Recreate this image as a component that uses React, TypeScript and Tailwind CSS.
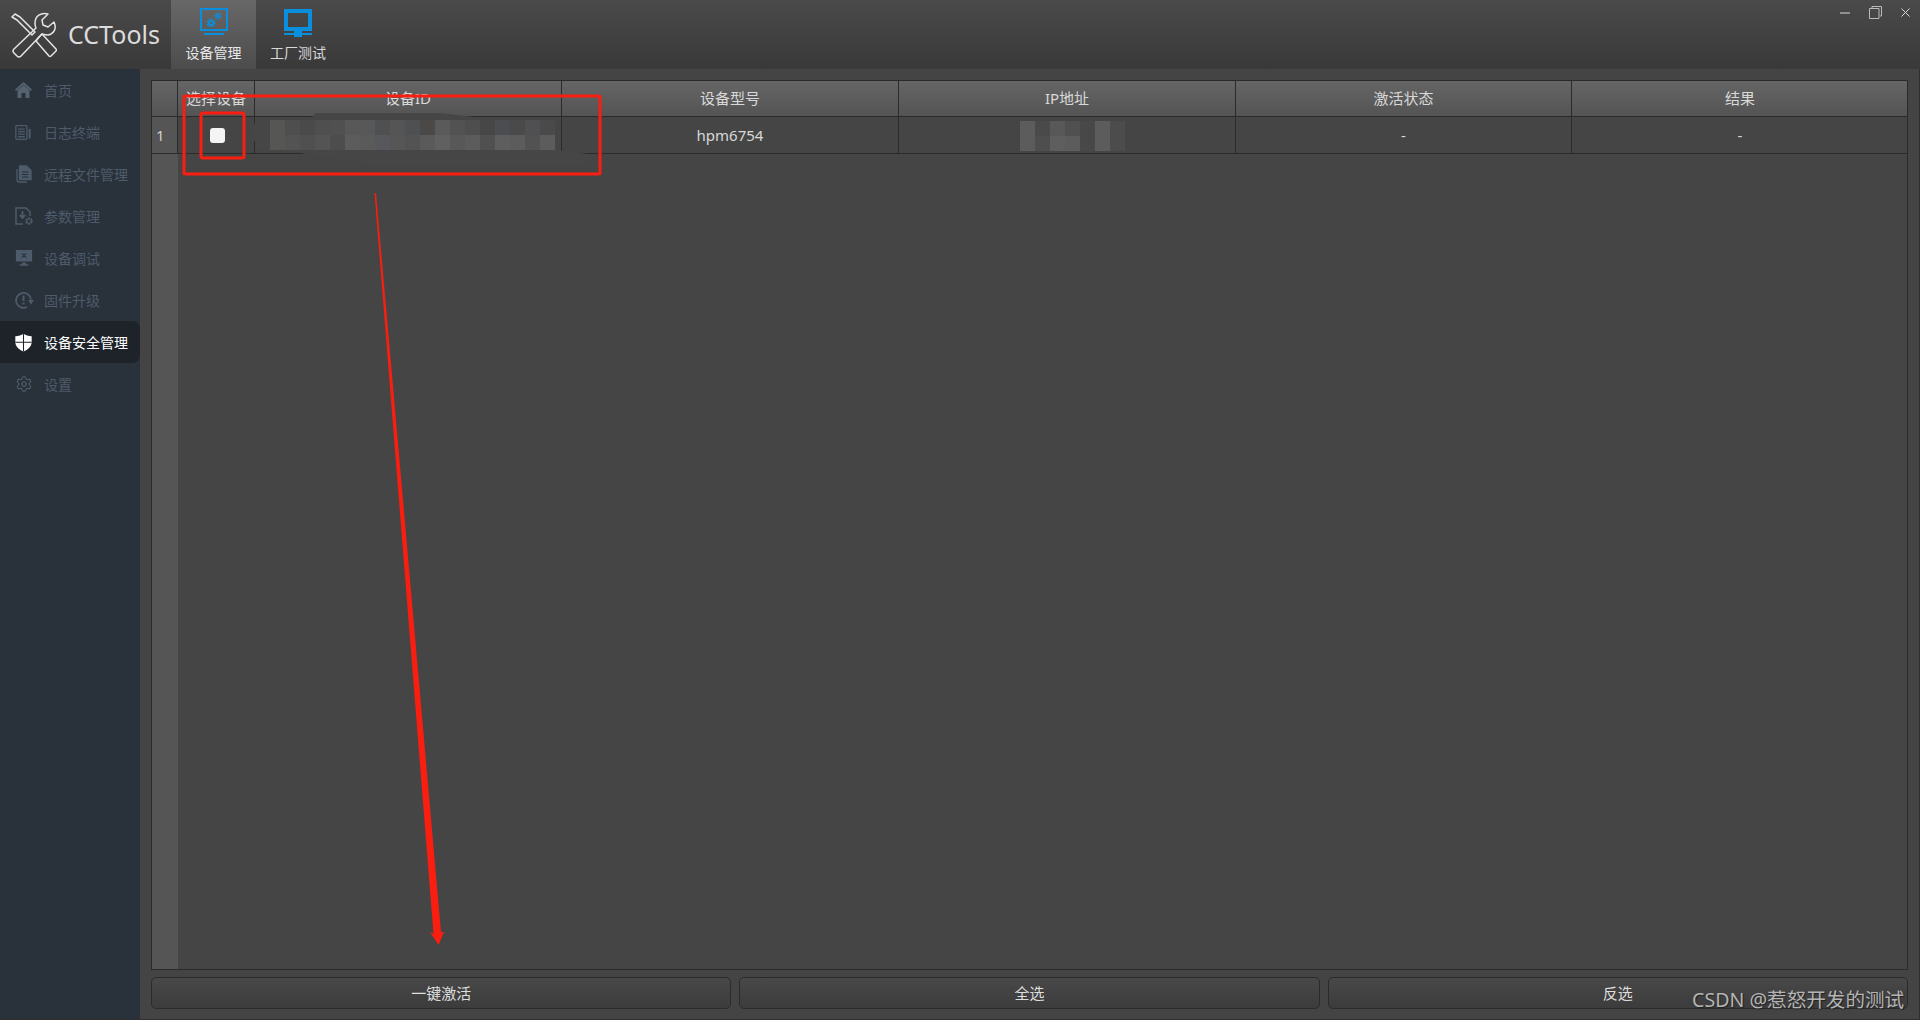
import { Settings } from 'lucide-react';

const font = { fontFamily: '"Noto Sans", "Noto Sans CJK SC", sans-serif' };

function HomeIcon() {
  return (
    <svg viewBox="0 0 17 16" className="h-[16px] w-[17px]" fill="#55626f">
      <path d="M8.500 0L17 7.500L16 9L8.500 2.500L1 9L0 7.500z" />
      <path d="M2.500 8L8.500 3L14.500 8V16H10.500V11H6.500V16H2.500z" />
    </svg>
  );
}

function LogIcon() {
  return (
    <svg viewBox="0 0 20 20" className="h-[17px] w-[17px]" fill="none" stroke="currentColor" strokeWidth="1.5">
      <rect x="1" y="2" width="13" height="16" rx="1" />
      <path d="M3.500 6h8M3.500 9h8M3.500 12h8M3.500 15h8" />
      <path d="M16 6h2.400v10l-1.200 2-1.200-2z" fill="currentColor" stroke="none" />
    </svg>
  );
}

function FileIcon() {
  return (
    <svg viewBox="0 0 16 18" className="h-[18px] w-[16px]" fill="none" stroke="#4e5b6a" strokeWidth="1.300">
      <path d="M1 4v11q0 2 2 2h8" />
      <path d="M3.500 1H10.500L15 5.500V14.500H3.500z" fill="#4e5b6a" />
      <path d="M6 7h6.500M6 9.500h6.500M6 12h6.500" stroke="#29313b" strokeWidth="1" />
    </svg>
  );
}

function ParamIcon() {
  return (
    <svg viewBox="0 0 20 20" className="h-[20px] w-[20px]" fill="none" stroke="currentColor" strokeWidth="1.500">
      <path d="M9 18H2V2h10l4 4v4" />
      <path d="M8.500 5v6M5.800 9l2.700 3 2.700-3" strokeWidth="1.800" />
      <circle cx="15" cy="15" r="2.600" strokeWidth="2.400" strokeDasharray="2 0.700" />
    </svg>
  );
}

function DebugIcon() {
  return (
    <svg viewBox="0 0 20 20" className="h-[18px] w-[18px]" fill="currentColor">
      <path d="M1 1h18v13H1zM8 15h4v2h3v1.500H5V17h3z" />
      <path d="M7.500 5l5 4.500M12.500 5l-5 4.500" stroke="#29313b" strokeWidth="1.200" />
    </svg>
  );
}

function UpgradeIcon() {
  return (
    <svg viewBox="0 0 20 20" className="h-[20px] w-[20px]" fill="none" stroke="currentColor" strokeWidth="1.800">
      <path d="M17 9.500A7.500 7.500 0 1 0 13 17" />
      <path d="M14 10h6l-3 4.500z" fill="currentColor" stroke="none" />
      <path d="M9.500 5.500v5.500M9.500 12.500v2" strokeWidth="2" />
    </svg>
  );
}

function ShieldIcon() {
  return (
    <svg viewBox="0 0 20 20" className="h-[19px] w-[19px]" fill="currentColor">
      <path d="M10 .8c2.400 1.600 5 2.300 8.600 2.500v6.200c0 4.400-3.400 8-8.600 9.900-5.200-1.900-8.600-5.500-8.600-9.900V3.300C5 3.100 7.600 2.400 10 .8z" />
      <path d="M10 .8v18.600M1.400 9.800h17.200" stroke="#1e2329" strokeWidth="1.100" />
    </svg>
  );
}

const menu = [
  { label: '首页', icon: <HomeIcon /> },
  { label: '日志终端', icon: <LogIcon /> },
  { label: '远程文件管理', icon: <FileIcon /> },
  { label: '参数管理', icon: <ParamIcon /> },
  { label: '设备调试', icon: <DebugIcon /> },
  { label: '固件升级', icon: <UpgradeIcon /> },
  { label: '设备安全管理', icon: <ShieldIcon />, active: true },
  { label: '设置', icon: <Settings className="h-[18px] w-[18px]" strokeWidth={1.500} /> },
];

const columns = [
  { title: '选择设备', width: 'w-[77px]', value: '' },
  { title: '设备ID', width: 'w-[307px]', value: '' },
  { title: '设备型号', width: 'w-[337px]', value: 'hpm6754' },
  { title: 'IP地址', width: 'w-[337px]', value: '' },
  { title: '激活状态', width: 'w-[336px]', value: '-' },
  { title: '结果', width: 'w-[336px]', value: '-' },
];

const idMosaic = [
  ['#565654', '#4e4e4e', '#4a4a4a', '#4f4f4f', '#505050', '#585858', '#585858', '#4e5052', '#555555', '#4f5052', '#4a4948', '#5a5a5a', '#525252', '#4e4e4e', '#474747', '#4c4d50', '#4a4a4a', '#505052', '#4a4a4a'],
  ['#565654', '#535353', '#505050', '#545454', '#4d4d4d', '#5c5c5c', '#5a5a5a', '#56585c', '#565656', '#535353', '#5a5a5a', '#606060', '#585858', '#5c5c5c', '#505050', '#5e5e5e', '#5c5c5c', '#525252', '#5c5c5c'],
];

const ipMosaic = [
  ['#5c5c5c', '#4a4a4a', '#585858', '#505050', '#484848', '#5c5c5c', '#4c4c4c'],
  ['#5c5c5c', '#4e4e4e', '#5e5e5e', '#5c5c5c', '#484848', '#5c5c5c', '#4c4c4c'],
];

function Mosaic({ rows, className }: { rows: string[][]; className: string }) {
  return (
    <div className={`absolute flex flex-col ${className}`}>
      {rows.map((row, i) => (
        <div key={i} className="flex h-[15px]">
          {row.map((c, j) => (
            <div key={j} className="h-full w-[15px]" style={{ backgroundColor: c }} />
          ))}
        </div>
      ))}
    </div>
  );
}

// the hand-drawn privacy smudge that sits under the mosaic
function Smudge() {
  return (
    <svg className="pointer-events-none absolute left-0 top-0 h-[1020px] w-[1920px]" viewBox="0 0 1920 1020">
      <path d="M255 121L310 119L316 113L440 113L500 120L556 128L558 150L588 154L590 162L586 165L372 165L300 153L258 150L252 135z" fill="#464646" />
    </svg>
  );
}

function Annotations() {
  return (
    <svg className="pointer-events-none absolute left-0 top-0 h-[1020px] w-[1920px]" viewBox="0 0 1920 1020" fill="none">
      <rect x="184" y="96" width="416" height="78" rx="1" stroke="#fa1e10" strokeWidth="3" />
      <rect x="201" y="113" width="43" height="45" rx="2" stroke="#fa1e10" strokeWidth="3" />
      <path d="M374.500 193L376 193L441 932L444 932L438.500 945L430 932L433.500 934z" fill="#fa1e10" />
    </svg>
  );
}

function TableHead() {
  return (
    <div className="flex h-[36px] border-b border-[#2b2b2b] bg-gradient-to-b from-[#656565] to-[#545454]">
      {columns.map((c) => (
        <div key={c.title} className={`flex ${c.width} shrink-0 items-center justify-center border-r border-[#2b2b2b] text-[15px] text-[#d8d8d8] last:border-r-0`}>
          {c.title}
        </div>
      ))}
    </div>
  );
}

function TableRow() {
  return (
    <div className="flex h-[37px] border-b border-[#2b2b2b]">
      {columns.map((c, i) => (
        <div key={c.title} className={`flex ${c.width} shrink-0 items-center justify-center border-r border-[#2b2b2b] text-[15px] text-[#d8d8d8] last:border-r-0`}>
          {i === 0 ? <div className="ml-[3px] h-[15px] w-[15px] rounded-[3px] bg-[#f4f4f4]" /> : c.value}
        </div>
      ))}
    </div>
  );
}

export default function App() {
  return (
    <div className="relative flex h-[1020px] w-[1920px] flex-col overflow-hidden bg-[#444444]" style={font}>
      <header className="flex h-[69px] shrink-0 bg-gradient-to-b from-[#4a4a4a] to-[#393939]">
        <div className="flex w-[171px] shrink-0 items-center pl-[11px]">
          <svg viewBox="0 0 46 46" className="h-[46px] w-[46px]" fill="none" stroke="#e4e4e4" strokeWidth="1.500" strokeLinejoin="round">
            <path d="M1 5L4 2L9 5L24 20L21 23L6 8z" />
            <path d="M28 25L31 22L45 37Q46 38 45 39L40 44Q39 45 38 44L25 29z" />
            <path d="M43 10L37 15L32 13L31 8L37 2C30 0 24 4 24 11Q24 14 25 16L3 37Q1 39 3 41L6 44Q8 46 10 44L31 22Q34 23 37 23C43 22 46 16 43 10z" />
          </svg>
          <span className="ml-[11px] text-[25px] leading-none text-[#dcdcdc]">CCTools</span>
        </div>
        <div className="flex h-full w-[85px] flex-col items-center bg-gradient-to-b from-[#686868] to-[#4c4c4c] pt-[8px]">
          <svg viewBox="0 0 28 28" className="h-[28px] w-[28px]" fill="none" stroke="#0a8fdf">
            <rect x="1" y="1" width="26" height="21" strokeWidth="2" />
            <path d="M4 26h20" strokeWidth="2" />
            <circle cx="11" cy="15" r="2.200" strokeWidth="1.800" />
            <circle cx="11" cy="15" r="3.700" strokeWidth="1.500" strokeDasharray="1.500 1.400" />
            <circle cx="18" cy="8" r="1.600" strokeWidth="1.400" />
            <circle cx="18" cy="8" r="2.800" strokeWidth="1.300" strokeDasharray="1.200 1" />
          </svg>
          <span className="mt-[10px] text-[14px] leading-none text-[#e8e8e8]">设备管理</span>
        </div>
        <div className="flex h-full w-[84px] flex-col items-center pt-[9px]">
          <svg viewBox="0 0 28 28" className="h-[28px] w-[28px]" fill="#0a8fdf">
            <path fillRule="evenodd" d="M0 0h28v22H0zM4 4v14h20V4z" />
            <path d="M10 22h8v2h10v2H18v2h-8v-2H0v-2h10z" />
          </svg>
          <span className="mt-[9px] text-[14px] leading-none text-[#d8d8d8]">工厂测试</span>
        </div>
        <div className="ml-auto flex h-[25px] items-center gap-[19px] pr-[10px] text-[#d8d8d8]">
          <svg viewBox="0 0 10 10" className="h-[10px] w-[10px]" stroke="currentColor"><path d="M0 5h10" /></svg>
          <svg viewBox="0 0 13 13" className="h-[13px] w-[13px]" fill="none" stroke="#bbbbbb"><path d="M3 2V.5h9.500V10H11M.5 2.500h9.500v10H.5z" /></svg>
          <svg viewBox="0 0 9 9" className="h-[9px] w-[9px]" stroke="currentColor"><path d="M.5.500l8 8M8.500.500l-8 8" /></svg>
        </div>
      </header>

      <div className="flex min-h-0 flex-1 border-b border-r border-[#2f2f2f]">
        <aside className="w-[140px] shrink-0 bg-[#29313b]">
          <nav>
            {menu.map((m) => (
              <div key={m.label} className={`flex h-[42px] items-center rounded-r-lg text-[14px] ${m.active ? 'bg-[#1e2329] text-white' : 'text-[#4e5b6a]'}`}>
                <span className="flex w-[44px] shrink-0 items-center justify-center pl-[3px]">{m.icon}</span>
                {m.label}
              </div>
            ))}
          </nav>
        </aside>

        <main className="flex min-w-0 flex-1 flex-col pl-[11px] pr-[11px] pt-[11px]">
          <div className="flex h-[890px] shrink-0 border border-[#2b2b2b] bg-[#454545]">
            <div className="flex w-[26px] shrink-0 flex-col bg-[#555555]">
              <div className="h-[36px] border-b border-r border-[#2b2b2b] bg-gradient-to-b from-[#656565] to-[#545454]" />
              <div className="flex h-[37px] items-center border-b border-r border-[#2b2b2b] pl-[4px] text-[15px] text-[#cfcfcf]">1</div>
            </div>
            <div className="min-w-0 flex-1">
              <TableHead />
              <TableRow />
            </div>
          </div>
          <div className="mt-[7px] flex gap-[8px]">
            {['一键激活', '全选', '反选'].map((b) => (
              <button key={b} className="h-[32px] flex-1 rounded-[5px] border border-[#2b2b2b] bg-gradient-to-b from-[#484848] to-[#3c3c3c] text-[15px] text-[#dedede]">
                {b}
              </button>
            ))}
          </div>
        </main>
      </div>

      <Smudge />
      <Mosaic rows={idMosaic} className="left-[270px] top-[120px]" />
      <Mosaic rows={ipMosaic} className="left-[1020px] top-[121px]" />
      <Annotations />
      <div className="absolute left-[1692px] top-[987px] text-[19.6px] leading-[26px] text-[#b4b4b4] [text-shadow:1px_1px_1px_#222222]">
        CSDN @惹怒开发的测试
      </div>
    </div>
  );
}
